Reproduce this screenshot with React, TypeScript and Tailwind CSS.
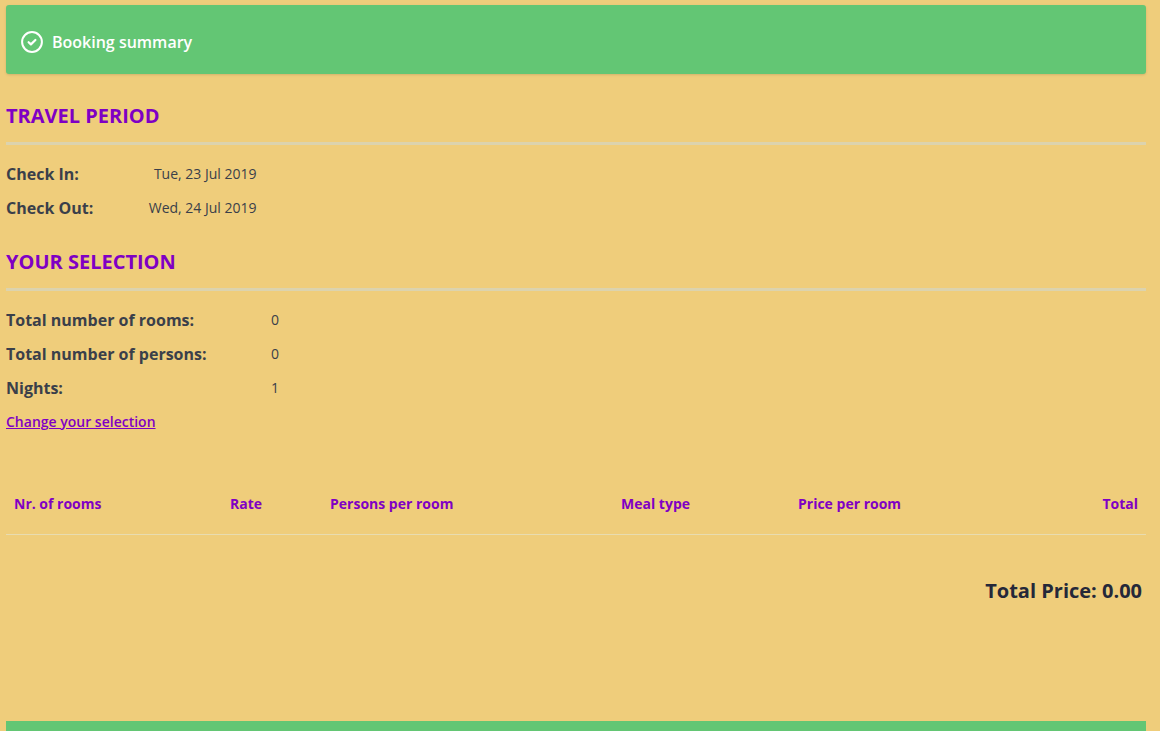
const travel = [
  { label: "Check In:", value: "Tue, 23 Jul 2019" },
  { label: "Check Out:", value: "Wed, 24 Jul 2019" },
];

const selection = [
  { label: "Total number of rooms:", value: "0" },
  { label: "Total number of persons:", value: "0" },
  { label: "Nights:", value: "1" },
];

function CheckCircle() {
  return (
    <svg width="22" height="22" viewBox="0 0 22 22" fill="none" stroke="white" strokeLinecap="round" strokeLinejoin="round">
      <circle cx="11" cy="11" r="9.9" strokeWidth="2" />
      <path d="M7.6 11.2l2.3 2.2 4.5-4.4" strokeWidth="2.2" />
    </svg>
  );
}

function Heading({ children }: { children: string }) {
  return (
    <div className="h-[43px] border-b-[3px] border-[#dcd3ae]">
      <h2 className="text-[20px] leading-[27px] font-bold text-[#7f00c4] uppercase">{children}</h2>
    </div>
  );
}

export default function App() {
  return (
    <div className="h-[731px] overflow-hidden bg-[#efcd7b] pl-[6px] pr-[14px] pt-[5px] text-[#3a3f4a] font-['Open_Sans',sans-serif]">
      <div className="flex h-[69px] items-center gap-[9px] rounded-[3px] bg-[#63c674] pl-[15px] pt-[5px] shadow-sm">
        <CheckCircle />
        <span className="text-[16px] font-semibold text-white">Booking summary</span>
      </div>

      <div className="mt-[28px]">
        <Heading>Travel period</Heading>
      </div>
      <div className="mt-[12px] w-[250.5px]">
        {travel.map((row) => (
          <div key={row.label} className="flex h-[34px] justify-between leading-[34px]">
            <span className="text-[16px] font-bold">{row.label}</span>
            <span className="text-[14px]">{row.value}</span>
          </div>
        ))}
      </div>

      <div className="mt-[23px]">
        <Heading>Your selection</Heading>
      </div>
      <div className="mt-[12px]">
        {selection.map((row) => (
          <div key={row.label} className="flex h-[34px] leading-[34px]">
            <span className="w-[265px] text-[16px] font-bold">{row.label}</span>
            <span className="text-[14px]">{row.value}</span>
          </div>
        ))}
      </div>
      <a className="block h-[34px] text-[14px] leading-[34px] font-semibold text-[#7f00c4] underline">Change your selection</a>

      <div className="mt-[46px] flex h-[50px] border-b border-[#e8dcb0] px-[8px] pt-[9px] text-[14px] leading-[20px] font-bold text-[#7f00c4]">
        <span className="w-[216px]">Nr. of rooms</span>
        <span className="w-[100px]">Rate</span>
        <span className="w-[291px]">Persons per room</span>
        <span className="w-[177px]">Meal type</span>
        <span>Price per room</span>
        <span className="ml-auto">Total</span>
      </div>

      <div className="mt-[42px] pr-[4px] text-right text-[20px] leading-[27px] font-bold text-[#252839]">Total Price: 0.00</div>

      <div className="mt-[117px] h-[20px] bg-[#63c674]" />
    </div>
  );
}
